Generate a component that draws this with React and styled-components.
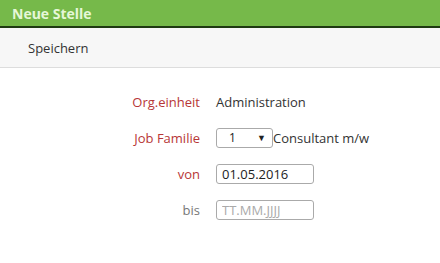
import React from "react";
import styled, { createGlobalStyle } from "styled-components";

const Global = createGlobalStyle`
  html, body { margin: 0; padding: 0; background: #fff; }
  body { font-family: "Open Sans", "Noto Sans", sans-serif; font-size: 13px; color: #333; }
`;

const Header = styled.div`
  height: 26px;
  background: #76b94a;
  border-bottom: 2px solid #1f3a12;
  color: #e6f7d8;
  font-weight: 700;
  font-size: 14px;
  line-height: 27px;
  padding-left: 12px;
  box-sizing: content-box;
`;

const Toolbar = styled.div`
  height: 39px;
  background: #f7f7f7;
  border-bottom: 1px solid #ddd;
  display: flex;
  align-items: center;
  padding-left: 28px;
`;

const ToolButton = styled.span`
  font-size: 13px;
  color: #333;
`;

const Form = styled.div`
  display: grid;
  grid-template-columns: 200px 1fr;
  column-gap: 16px;
  row-gap: 16px;
  padding-top: 24px;
  align-items: center;
`;

const Label = styled.div`
  text-align: right;
  color: ${(p) => (p.$required ? "#b73636" : "#777")};
  line-height: 20px;
`;

const Value = styled.div`
  display: flex;
  align-items: center;
  line-height: 20px;
`;

const Select = styled.div`
  width: 57px;
  height: 20px;
  border: 1px solid #aaa;
  border-radius: 3px;
  display: flex;
  align-items: center;
  justify-content: space-between;
  padding: 0 6px 0 12px;
  box-sizing: border-box;
  font-size: 12px;
  color: #222;
`;

const Arrow = styled.span`
  font-size: 9px;
`;

const Input = styled.input`
  width: 98px;
  height: 20px;
  border: 1px solid #aaa;
  border-radius: 3px;
  box-sizing: border-box;
  padding: 0 0 0 5px;
  font-family: "Open Sans", sans-serif;
  font-size: 13px;
  color: #222;
  margin: 0;
  &::placeholder { color: #aaa; }
`;

export default function App() {
  return (
    <>
      <Global />
      <Header>Neue Stelle</Header>
      <Toolbar>
        <ToolButton>Speichern</ToolButton>
      </Toolbar>
      <Form>
        <Label $required>Org.einheit</Label>
        <Value>Administration</Value>
        <Label $required>Job Familie</Label>
        <Value>
          <Select>
            <span>1</span>
            <Arrow>▼</Arrow>
          </Select>
          Consultant m/w
        </Value>
        <Label $required>von</Label>
        <Value>
          <Input defaultValue="01.05.2016" />
        </Value>
        <Label>bis</Label>
        <Value>
          <Input placeholder="TT.MM.JJJJ" />
        </Value>
      </Form>
    </>
  );
}
